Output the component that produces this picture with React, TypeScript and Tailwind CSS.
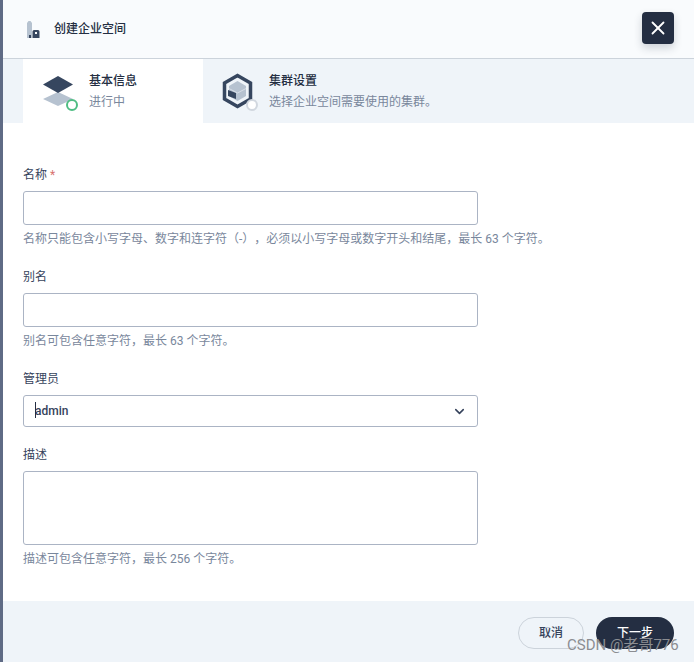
import { ChevronDown, X } from 'lucide-react';

const font = { fontFamily: 'Roboto, "Noto Sans CJK SC", sans-serif' };

function LayersIcon() {
    return (
        <svg width="38" height="38" viewBox="0 0 38 38" className="absolute left-[20px] top-[16px]">
            <path d="M15 17 L30 24 L15 31 L0 24 Z" fill="#b6c2d0" />
            <path d="M15 1 L30 9.5 L15 18 L0 9.5 Z" fill="#36465f" />
            <circle cx="29" cy="30" r="5" fill="#fff" stroke="#4fbd83" strokeWidth="2" />
        </svg>
    );
}

function ClusterIcon() {
    return (
        <svg width="38" height="40" viewBox="0 0 38 40" className="absolute left-[19px] top-[14px]">
            <path d="M15.5 2.5 L28.5 10 L28.5 26 L15.5 33.5 L2.5 26 L2.5 10 Z" fill="none" stroke="#36465f" strokeWidth="3.5" />
            <path d="M15.5 8 L24 13 L24 23 L15.5 28 L7 23 L7 13 Z" fill="#b6c2d0" />
            <path d="M6 17 L14 20 L14 26 L6 23 Z" fill="#36465f" />
            <path d="M7 15.5 L15.5 20 L24 15.5" fill="none" stroke="#dfe5ec" strokeWidth="0.8" />
            <circle cx="30" cy="32" r="5" fill="#fff" stroke="#d1d7df" strokeWidth="2" />
        </svg>
    );
}

function Field({ label, required, help, children }: { label: string; required?: boolean; help?: string; children: React.ReactNode }) {
    return (
        <div>
            <div className="text-xs leading-[18px] text-[#36435c] mb-[7px]">
                {label}
                {required && <span className="text-[#d8736f]"> *</span>}
            </div>
            {children}
            {help && <div className="text-xs leading-[18px] text-[#79879c] mt-[5px]">{help}</div>}
        </div>
    );
}

export default function App() {
    return (
        <div className="relative flex w-[694px] h-[662px] overflow-hidden bg-white [text-spacing-trim:space-all]" style={font}>
            <div className="w-[3px] bg-[#5f6b85]" />

            <div className="flex-1 flex flex-col min-w-0">
                {/* Header */}
                <header className="h-[59px] flex items-center gap-[14px] pl-[24px] bg-[#f9fbfd] border-b border-[#ccd3db]">
                    <svg width="13" height="18" viewBox="0 0 13 18" className="mt-[1px]">
                        <path d="M0 2 L1.5 0 L3.5 0 L5 2 L5 17 L0 17 Z" fill="#b6c2d0" />
                        <path d="M2 14 L4 14 L4 17 L2 17 Z" fill="#36465f" />
                        <path fillRule="evenodd" d="M5.5 10.5 Q5.5 9 7 9 L11 9 Q12.5 9 12.5 10.5 L12.5 17 L5.5 17 Z M8 11 L8 13 L10 13 L10 11 Z" fill="#36465f" />
                    </svg>
                    <span className="text-xs font-medium text-[#242e42]">创建企业空间</span>
                </header>

                {/* Steps */}
                <div className="h-[64px] flex pl-[20px] bg-[#eff4f9]">
                    <div className="relative w-[180px] bg-white pl-[66px] pt-[13px]">
                        <LayersIcon />
                        <div className="text-xs font-medium leading-[18px] text-[#242e42]">基本信息</div>
                        <div className="text-xs leading-[18px] mt-[3px] text-[#79879c]">进行中</div>
                    </div>
                    <div className="relative flex-1 pl-[66px] pt-[13px]">
                        <ClusterIcon />
                        <div className="text-xs font-medium leading-[18px] text-[#242e42]">集群设置</div>
                        <div className="text-xs leading-[18px] mt-[3px] text-[#79879c]">选择企业空间需要使用的集群。</div>
                    </div>
                </div>

                {/* Form */}
                <div className="flex-1 pl-[20px] pt-[43px] flex flex-col gap-[20px]">
                    <Field label="名称" required help="名称只能包含小写字母、数字和连字符（-），必须以小写字母或数字开头和结尾，最长 63 个字符。">
                        <input className="block w-[455px] h-[34px] bg-white border border-[#abb4c4] rounded-[3px]" />
                    </Field>
                    <Field label="别名" help="别名可包含任意字符，最长 63 个字符。">
                        <input className="block w-[455px] h-[34px] bg-white border border-[#abb4c4] rounded-[3px]" />
                    </Field>
                    <Field label="管理员">
                        <div className="flex items-center justify-between w-[455px] h-[32px] pl-[11px] pr-[10px] border border-[#abb4c4] rounded-[3px]">
                            <span className="relative text-xs font-medium text-[#36435c]">
                                <span className="absolute left-0 top-[-1px] w-px h-[16px] bg-[#242e42]" />
                                admin
                            </span>
                            <ChevronDown size={15} strokeWidth={2.5} className="text-[#36435c]" />
                        </div>
                    </Field>
                    <div className="-mt-px">
                        <Field label="描述" help="描述可包含任意字符，最长 256 个字符。">
                            <textarea className="block w-[455px] h-[74px] bg-white border border-[#abb4c4] rounded-[3px] resize-none" />
                        </Field>
                    </div>
                </div>

                {/* Footer */}
                <footer className="h-[61px] flex items-start justify-end gap-[12px] pt-[16px] pr-[20px] bg-[#eff4f9]">
                    <button className="w-[66px] h-[32px] rounded-full border border-[#ccd3db] text-xs font-medium text-[#36435c]">取消</button>
                    <button className="w-[78px] h-[32px] rounded-full bg-[#242e42] text-xs font-medium text-white">下一步</button>
                </footer>
            </div>

            {/* Close button */}
            <button className="absolute left-[642px] top-[12px] w-[32px] h-[32px] flex items-center justify-center rounded-[4px] bg-[#242e42] text-white shadow-[0_4px_8px_0_rgba(36,46,66,0.2)]">
                <X size={22} strokeWidth={2} />
            </button>

            {/* Watermark */}
            <div className="absolute left-[567px] top-[636px] text-[15px] leading-[18px] text-[#8b8d92] whitespace-nowrap">CSDN @老哥776</div>
        </div>
    );
}
